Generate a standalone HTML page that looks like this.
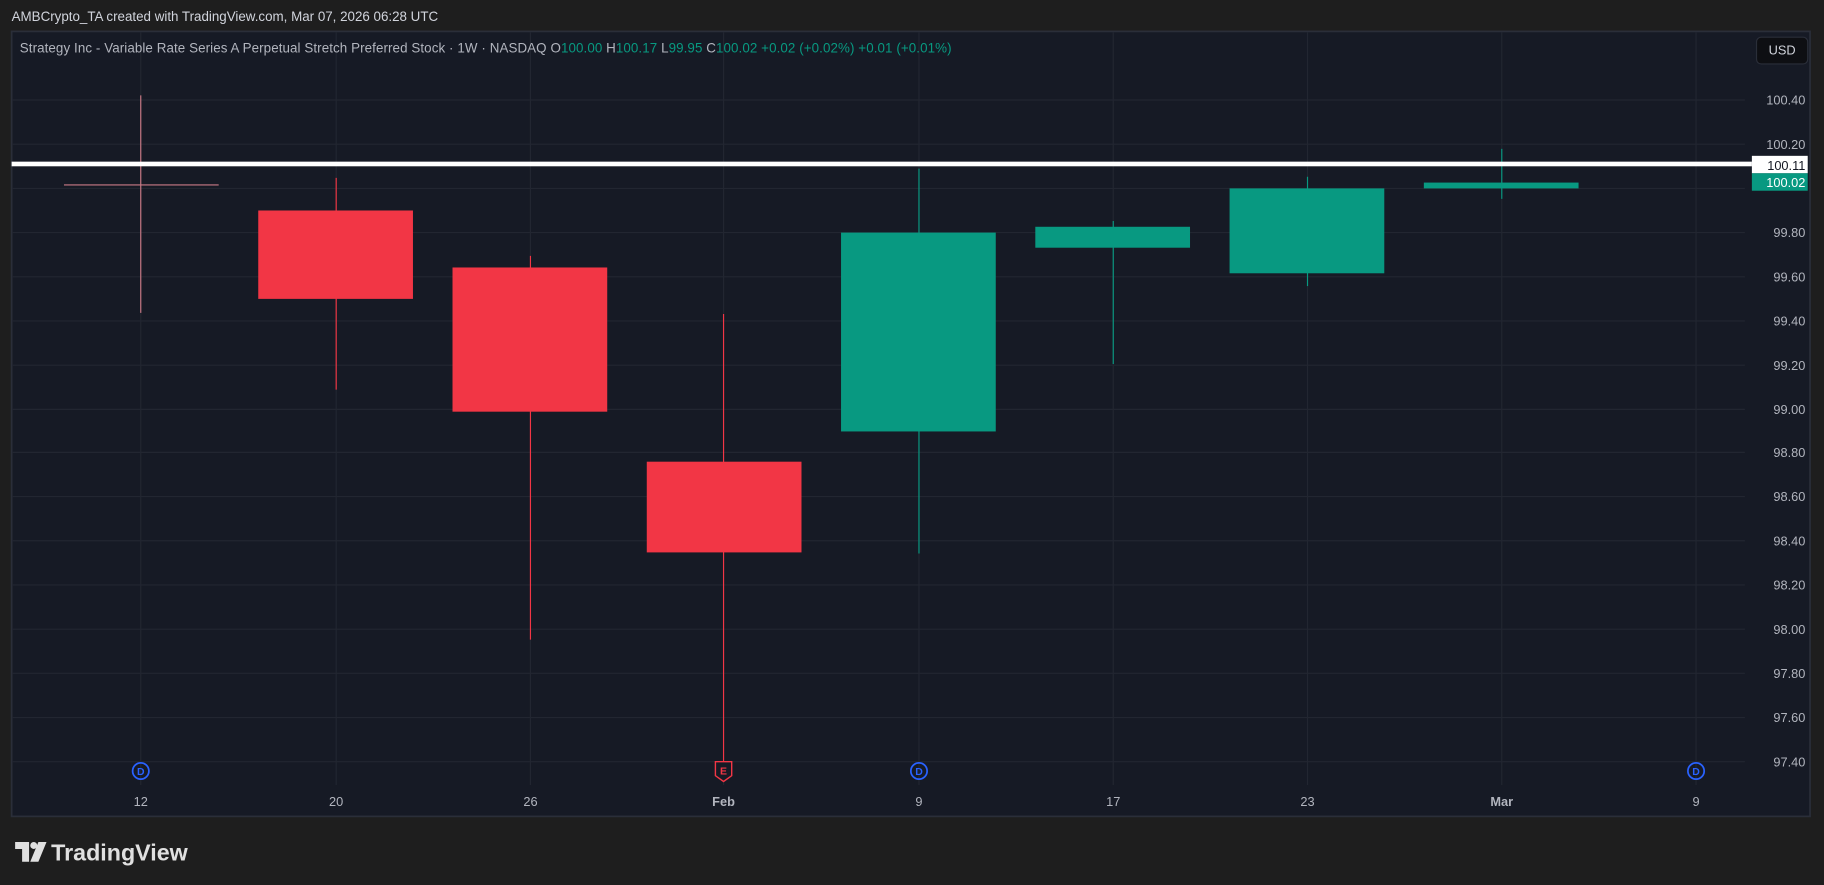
<!DOCTYPE html>
<html><head><meta charset="utf-8"><style>
html,body{margin:0;padding:0;background:#1e1e1e;width:1824px;height:885px;overflow:hidden}
svg{display:block}
text{font-family:"Liberation Sans",sans-serif}
</style></head><body>
<svg width="1824" height="885" viewBox="0 0 1568 761" preserveAspectRatio="none" xmlns="http://www.w3.org/2000/svg">
<rect width="1568" height="761" fill="#1e1e1e"/>
<text x="10" y="18" fill="#d1d4dc" font-size="11.5">AMBCrypto_TA created with TradingView.com, Mar 07, 2026 06:28 UTC</text>
<rect x="10" y="27" width="1546" height="675" fill="#161a25" stroke="#2a2e39" stroke-width="1.5"/>
<g stroke="#222631" stroke-width="1">
<line x1="11" y1="86" x2="1500" y2="86"/><line x1="11" y1="124" x2="1500" y2="124"/><line x1="11" y1="162" x2="1500" y2="162"/><line x1="11" y1="200" x2="1500" y2="200"/><line x1="11" y1="238" x2="1500" y2="238"/><line x1="11" y1="276" x2="1500" y2="276"/><line x1="11" y1="314" x2="1500" y2="314"/><line x1="11" y1="352" x2="1500" y2="352"/><line x1="11" y1="389" x2="1500" y2="389"/><line x1="11" y1="427" x2="1500" y2="427"/><line x1="11" y1="465" x2="1500" y2="465"/><line x1="11" y1="503" x2="1500" y2="503"/><line x1="11" y1="541" x2="1500" y2="541"/><line x1="11" y1="579" x2="1500" y2="579"/><line x1="11" y1="617" x2="1500" y2="617"/><line x1="11" y1="655" x2="1500" y2="655"/>
<line x1="121" y1="28" x2="121" y2="675"/><line x1="289" y1="28" x2="289" y2="675"/><line x1="456" y1="28" x2="456" y2="675"/><line x1="622" y1="28" x2="622" y2="675"/><line x1="790" y1="28" x2="790" y2="675"/><line x1="957" y1="28" x2="957" y2="675"/><line x1="1124" y1="28" x2="1124" y2="675"/><line x1="1291" y1="28" x2="1291" y2="675"/><line x1="1458" y1="28" x2="1458" y2="675"/>
</g>
<text x="17" y="45" font-size="11.5" fill="#b2b5be" textLength="801" lengthAdjust="spacing">Strategy Inc - Variable Rate Series A Perpetual Stretch Preferred Stock · 1W · NASDAQ  <tspan>O</tspan><tspan fill="#089981">100.00</tspan>  <tspan>H</tspan><tspan fill="#089981">100.17</tspan>  <tspan>L</tspan><tspan fill="#089981">99.95</tspan>  <tspan>C</tspan><tspan fill="#089981">100.02  +0.02 (+0.02%)  +0.01 (+0.01%)</tspan></text>
<g stroke-width="1">
<line x1="121" y1="82" x2="121" y2="269" stroke="#c97a86"/>
<line x1="55" y1="159" x2="188" y2="159" stroke="#c97a86"/>
<line x1="289" y1="153" x2="289" y2="335" stroke="#f23645"/>
<line x1="456" y1="220" x2="456" y2="550" stroke="#f23645"/>
<line x1="622" y1="270" x2="622" y2="660" stroke="#f23645"/>
<line x1="790" y1="145" x2="790" y2="476" stroke="#089981"/>
<line x1="957" y1="190" x2="957" y2="313" stroke="#089981"/>
<line x1="1124" y1="152" x2="1124" y2="246" stroke="#089981"/>
<line x1="1291" y1="128" x2="1291" y2="171" stroke="#089981"/>
</g>
<rect x="222" y="181" width="133" height="76" fill="#f23645"/>
<rect x="389" y="230" width="133" height="124" fill="#f23645"/>
<rect x="556" y="397" width="133" height="78" fill="#f23645"/>
<rect x="723" y="200" width="133" height="171" fill="#089981"/>
<rect x="890" y="195" width="133" height="18" fill="#089981"/>
<rect x="1057" y="162" width="133" height="73" fill="#089981"/>
<rect x="1224" y="157" width="133" height="5" fill="#089981"/>
<rect x="10" y="139" width="1496" height="4" fill="#ffffff"/>
<g font-size="11" fill="#b2b5be" text-anchor="end">
<text x="1552" y="90">100.40</text><text x="1552" y="128">100.20</text><text x="1552" y="204">99.80</text><text x="1552" y="242">99.60</text><text x="1552" y="280">99.40</text><text x="1552" y="318">99.20</text><text x="1552" y="356">99.00</text><text x="1552" y="393">98.80</text><text x="1552" y="431">98.60</text><text x="1552" y="469">98.40</text><text x="1552" y="507">98.20</text><text x="1552" y="545">98.00</text><text x="1552" y="583">97.80</text><text x="1552" y="621">97.60</text><text x="1552" y="659">97.40</text>
</g>
<rect x="1506" y="134" width="48" height="15" fill="#ffffff"/>
<text x="1552" y="146" font-size="11" fill="#131722" text-anchor="end">100.11</text>
<rect x="1506" y="149" width="48" height="15" fill="#089981"/>
<text x="1552" y="161" font-size="11" fill="#ffffff" text-anchor="end">100.02</text>
<rect x="1510" y="32" width="44" height="23" rx="4" fill="#0e0f13" stroke="#2a2e39"/>
<text x="1532" y="47" font-size="11" fill="#d1d4dc" text-anchor="middle">USD</text>
<g font-size="9" font-weight="bold" text-anchor="middle">
<circle cx="121" cy="663" r="7" fill="none" stroke="#2962ff" stroke-width="1.5"/><text x="121" y="666.5" fill="#2962ff">D</text>
<circle cx="790" cy="663" r="7" fill="none" stroke="#2962ff" stroke-width="1.5"/><text x="790" y="666.5" fill="#2962ff">D</text>
<circle cx="1458" cy="663" r="7" fill="none" stroke="#2962ff" stroke-width="1.5"/><text x="1458" y="666.5" fill="#2962ff">D</text>
<path d="M615 655 H629 V667 L622 672 L615 667 Z" fill="#161a25" stroke="#f23645" stroke-width="1.2"/><text x="622" y="666" fill="#f23645">E</text>
</g>
<g font-size="11" fill="#b2b5be" text-anchor="middle">
<text x="121" y="693">12</text><text x="289" y="693">20</text><text x="456" y="693">26</text><text x="622" y="693" font-weight="bold">Feb</text><text x="790" y="693">9</text><text x="957" y="693">17</text><text x="1124" y="693">23</text><text x="1291" y="693" font-weight="bold">Mar</text><text x="1458" y="693">9</text>
</g>
<path d="M13 724 H25 V741 H19 V730 H13 Z" fill="#e0e0e0"/>
<circle cx="29" cy="727" r="3" fill="#e0e0e0"/>
<path d="M33 724 H40 L33 741 H26 Z" fill="#e0e0e0"/>
<text x="44" y="740" font-size="20" font-weight="bold" fill="#e0e0e0">TradingView</text>
</svg>
</body></html>
